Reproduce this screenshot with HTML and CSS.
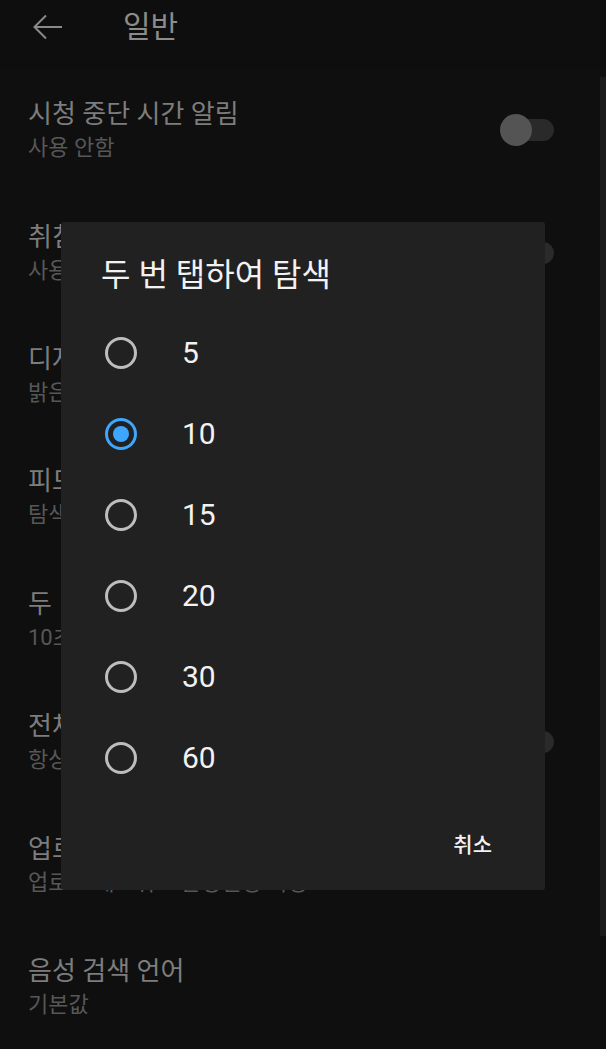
FILE: index.html
```html
<!DOCTYPE html>
<html lang="ko">
<head>
<meta charset="utf-8">
<link rel="stylesheet" href="styles.css">
</head>
<body>
<div class="screen">
  <header class="appbar">
    <svg class="back" width="32" height="28" viewBox="0 0 32 28">
      <path d="M30 14H3M14 2.5L2.5 14L14 25.5" fill="none" stroke="#8a8a8a" stroke-width="2"/>
    </svg>
    <span class="appbar-title">일반</span>
  </header>
  <ul class="settings">
    <li class="item">
      <div class="texts"><div class="title">시청 중단 시간 알림</div><div class="sub">사용 안함</div></div>
      <span class="toggle"><span class="thumb"></span></span>
    </li>
    <li class="item">
      <div class="texts"><div class="title">취침 시간 알림</div><div class="sub">사용 안함</div></div>
      <span class="toggle"><span class="thumb"></span></span>
    </li>
    <li class="item">
      <div class="texts"><div class="title">디자인</div><div class="sub">밝은 테마</div></div>
    </li>
    <li class="item">
      <div class="texts"><div class="title">피드에서 음소거 재생</div><div class="sub">탐색 및 구독 피드</div></div>
    </li>
    <li class="item">
      <div class="texts"><div class="title wide">두 번 탭하여 탐색</div><div class="sub">10초</div></div>
    </li>
    <li class="item">
      <div class="texts"><div class="title">전체 화면으로 확대</div><div class="sub">항상 전체 화면으로 확대</div></div>
      <span class="toggle"><span class="thumb"></span></span>
    </li>
    <li class="item">
      <div class="texts"><div class="title">업로드</div><div class="sub">업로드 네트워크 환경설정 지정</div></div>
    </li>
    <li class="item">
      <div class="texts"><div class="title">음성 검색 언어</div><div class="sub">기본값</div></div>
    </li>
  </ul>
  <div class="scrollbar"></div>

  <div class="dialog">
    <h2 class="dialog-title">두 번 탭하여 탐색</h2>
    <ul class="options">
      <li class="option"><span class="radio"></span><span class="label">5</span></li>
      <li class="option"><span class="radio checked"></span><span class="label">10</span></li>
      <li class="option"><span class="radio"></span><span class="label">15</span></li>
      <li class="option"><span class="radio"></span><span class="label">20</span></li>
      <li class="option"><span class="radio"></span><span class="label">30</span></li>
      <li class="option"><span class="radio"></span><span class="label">60</span></li>
    </ul>
    <div class="actions"><button class="btn">취소</button></div>
  </div>
</div>
</body>
</html>
```

FILE: styles.css
```css
* { box-sizing: border-box; }
html, body {
  margin: 0;
  padding: 0;
  background: #0f0f0f;
}
body {
  font-family: Roboto, "Noto Sans CJK KR", sans-serif;
  width: 606px;
  height: 1049px;
  overflow: hidden;
}
.screen {
  position: relative;
  width: 606px;
  height: 1049px;
  background: #0f0f0f;
}
.appbar {
  height: 69px;
  display: flex;
  align-items: flex-start;
  padding-top: 13px;
  background: #0e0e0e;
}
.back {
  margin-left: 32px;
  display: block;
}
.appbar-title {
  margin-left: 59px;
  font-size: 30px;
  line-height: 30px;
  color: #8c8c8c;
  margin-top: -1px;
}
.settings {
  list-style: none;
  margin: 0;
  padding: 0;
}
.item {
  height: 122.4px;
  display: flex;
  align-items: center;
  justify-content: space-between;
  padding: 0 52px 0 28px;
}
.texts {
  display: flex;
  flex-direction: column;
  gap: 4px;
}
.title {
  font-size: 26px;
  line-height: 32px;
  color: #7d7d7d;
  white-space: nowrap;
}
.title.wide {
  word-spacing: 3px;
}
.sub {
  font-size: 22px;
  line-height: 28px;
  color: #575757;
  white-space: nowrap;
}
.toggle {
  position: relative;
  width: 50px;
  height: 22px;
  border-radius: 11px;
  background: #2a2a2a;
  flex: none;
}
.thumb {
  position: absolute;
  left: -4px;
  top: -5px;
  width: 32px;
  height: 32px;
  border-radius: 50%;
  background: #545454;
}
.scrollbar {
  position: absolute;
  right: 0;
  top: 77px;
  width: 6px;
  height: 859px;
  background: #1b1b1b;
}
.dialog {
  position: absolute;
  left: 61px;
  top: 222px;
  width: 484px;
  height: 668px;
  background: #212121;
  border-radius: 3px;
  padding: 36px 0 20px;
  display: flex;
  flex-direction: column;
}
.dialog-title {
  margin: 0 0 20px 40px;
  font-size: 32px;
  line-height: 34px;
  font-weight: 400;
  color: #f2f2f2;
}
.options {
  list-style: none;
  margin: 0;
  padding: 0;
}
.option {
  height: 81px;
  display: flex;
  align-items: center;
  padding-left: 44px;
}
.radio {
  width: 32px;
  height: 32px;
  border-radius: 50%;
  border: 3px solid #bdbdbd;
  flex: none;
  display: flex;
  align-items: center;
  justify-content: center;
}
.radio.checked {
  border-color: #3ea6ff;
}
.radio.checked::after {
  content: "";
  width: 16px;
  height: 16px;
  border-radius: 50%;
  background: #3ea6ff;
}
.label {
  margin-left: 45px;
  font-size: 30px;
  color: #f2f2f2;
}
.actions {
  margin-top: auto;
  display: flex;
  justify-content: flex-end;
  padding-right: 40px;
}
.btn {
  background: none;
  border: 0;
  font-family: Roboto, "Noto Sans CJK KR", sans-serif;
  font-size: 21px;
  font-weight: 500;
  color: #f2f2f2;
  height: 54px;
  padding: 0 13px;
}
```
